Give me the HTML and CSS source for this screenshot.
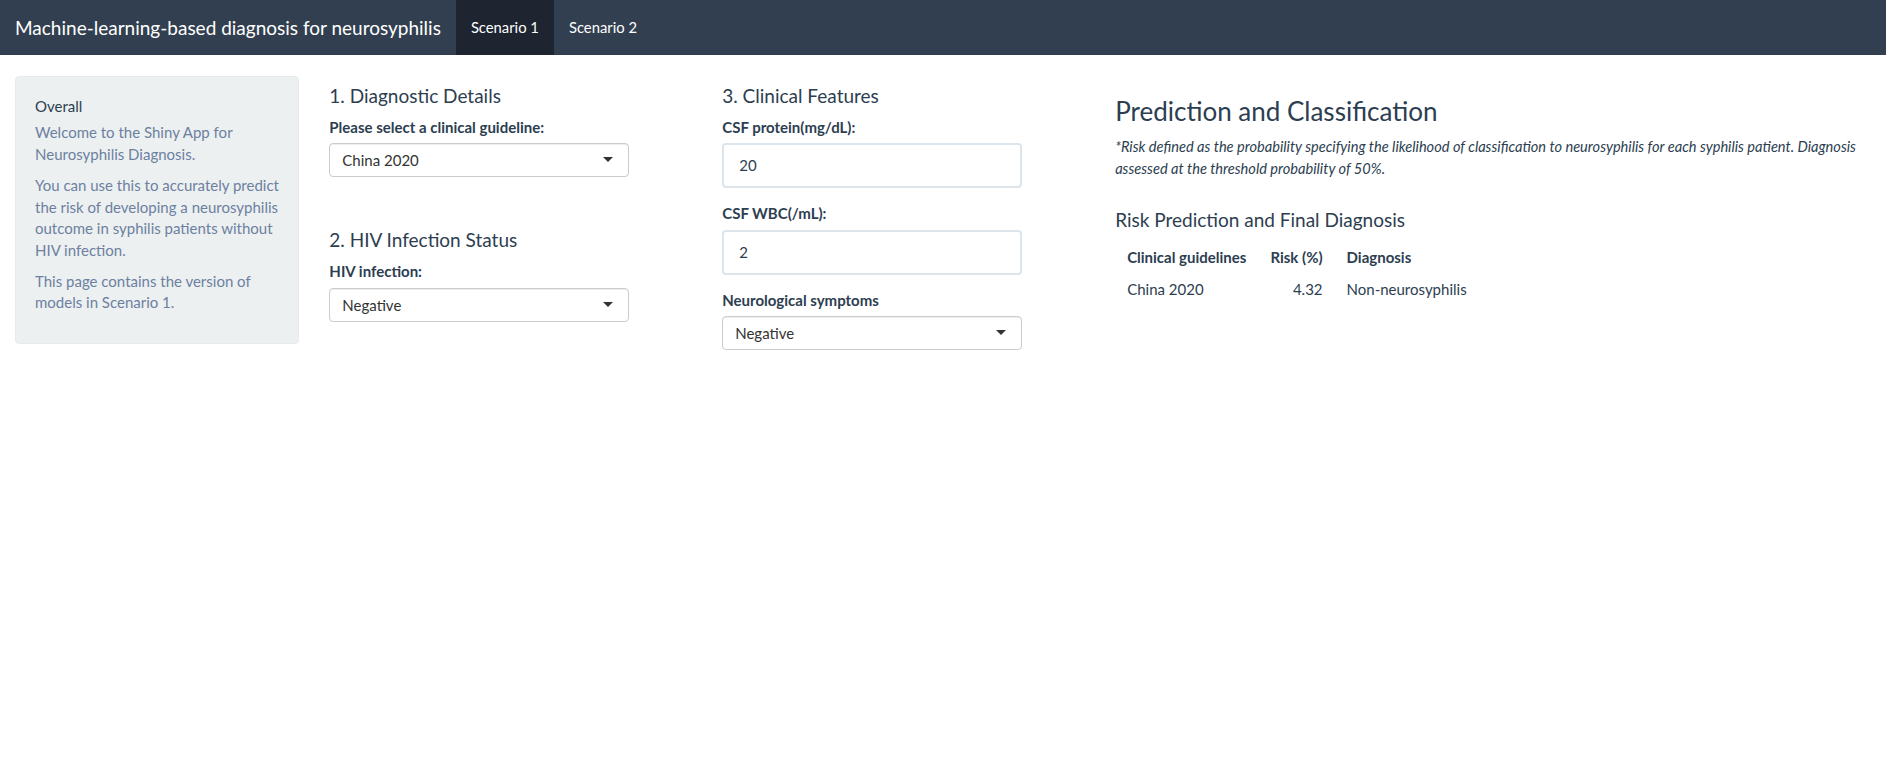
FILE: index.html
```html
<!DOCTYPE html>
<html lang="en">
<head>
<meta charset="utf-8">
<title>Machine-learning-based diagnosis for neurosyphilis</title>
<link rel="stylesheet" href="styles.css">
</head>
<body>
<nav class="navbar">
  <div class="brand">Machine-learning-based diagnosis for neurosyphilis</div>
  <ul class="nav">
    <li class="nav-item active"><a href="#">Scenario 1</a></li>
    <li class="nav-item"><a href="#">Scenario 2</a></li>
  </ul>
</nav>
<div class="container">
  <div class="row">
    <div class="col col-side">
      <div class="well">
        <div class="well-title">Overall</div>
        <p>Welcome to the Shiny App for Neurosyphilis Diagnosis.</p>
        <p>You can use this to accurately predict the risk of developing a neurosyphilis outcome in syphilis patients without HIV infection.</p>
        <p>This page contains the version of models in Scenario 1.</p>
      </div>
    </div>
    <div class="col col-main">
      <div class="row">
        <div class="col col-quarter">
          <h4 class="sec">1. Diagnostic Details</h4>
          <div class="form-group">
            <label class="lbl">Please select a clinical guideline:</label>
            <div class="select"><span>China 2020</span><span class="caret"></span></div>
          </div>
          <h4 class="sec sec-spaced">2. HIV Infection Status</h4>
          <div class="form-group">
            <label class="lbl">HIV infection:</label>
            <div class="select"><span>Negative</span><span class="caret"></span></div>
          </div>
        </div>
        <div class="col col-quarter">
          <h4 class="sec">3. Clinical Features</h4>
          <div class="form-group">
            <label class="lbl">CSF protein(mg/dL):</label>
            <div class="num-input">20</div>
          </div>
          <div class="form-group">
            <label class="lbl">CSF WBC(/mL):</label>
            <div class="num-input">2</div>
          </div>
          <div class="form-group">
            <label class="lbl">Neurological symptoms</label>
            <div class="select"><span>Negative</span><span class="caret"></span></div>
          </div>
        </div>
        <div class="col col-half">
          <h3 class="big">Prediction and Classification</h3>
          <p class="note">*Risk defined as the probability specifying the likelihood of classification to neurosyphilis for each syphilis patient. Diagnosis assessed at the threshold probability of 50%.</p>
          <h4 class="sec sec-result">Risk Prediction and Final Diagnosis</h4>
          <table class="result">
            <thead>
              <tr><th>Clinical guidelines</th><th class="num">Risk (%)</th><th>Diagnosis</th></tr>
            </thead>
            <tbody>
              <tr><td>China 2020</td><td class="num">4.32</td><td>Non-neurosyphilis</td></tr>
            </tbody>
          </table>
        </div>
      </div>
    </div>
  </div>
</div>
</body>
</html>
```
FILE: styles.css
```css
* { box-sizing: border-box; }
html, body { margin: 0; padding: 0; background: #ffffff; }
body {
  font-family: Lato, "Open Sans", "Liberation Sans", sans-serif;
  font-size: 15px;
  line-height: 1.42857;
  color: #2c3e50;
}

/* navbar */
.navbar {
  display: flex;
  align-items: stretch;
  height: 55px;
  background: #323f50;
  margin-bottom: 21px;
}
.brand {
  padding: 0 15px;
  font-size: 19px;
  line-height: 55px;
  color: #ffffff;
  white-space: nowrap;
}
.nav {
  display: flex;
  list-style: none;
  margin: 0;
  padding: 0;
}
.nav-item a {
  display: block;
  padding: 0 15px;
  line-height: 55px;
  color: #ffffff;
  text-decoration: none;
  font-size: 14.8px;
}
.nav-item.active a { background: #1e2430; }

/* grid */
.container { padding: 0 15px; }
.row { display: flex; margin: 0 -15px; }
.col { padding: 0 15px; min-width: 0; }
.col-side { width: 16.6667%; }
.col-main { width: 83.3333%; }
.col-quarter { width: 25%; }
.col-half { width: 50%; }

/* sidebar well */
.well {
  background: #ecf0f1;
  border: 1px solid #e6ebed;
  border-radius: 4px;
  padding: 19px;
}
.well-title { color: #2c3e50; margin-bottom: 5px; }
.well p { margin: 0 0 10px; color: #6c80a0; }

/* headings */
.sec {
  font-size: 19px;
  font-weight: 400;
  line-height: 1.1;
  margin: 10px 0 10px;
  color: #2c3e50;
}
.sec-spaced { margin-top: 53px; }
.sec-result { margin-top: 31px; }
.big {
  font-size: 26px;
  font-weight: 400;
  line-height: 1.1;
  margin: 21px 0 10.5px;
  color: #2c3e50;
}
.note {
  font-style: italic;
  font-size: 14.6px;
  line-height: 21.4px;
  margin: 0 0 10px;
  color: #2c3e50;
}

/* form controls */
.form-group { margin-bottom: 15px; }
.lbl {
  display: inline-block;
  font-weight: 700;
  margin-bottom: 5px;
}
.select {
  position: relative;
  width: 300px;
  max-width: 100%;
  height: 34px;
  padding: 6px 12px;
  border: 1px solid #cccccc;
  border-radius: 4px;
  background: #ffffff;
  box-shadow: inset 0 1px 1px rgba(0,0,0,0.075);
  color: #333333;
  line-height: 20px;
}
.caret {
  position: absolute;
  right: 15px;
  top: 50%;
  margin-top: -3px;
  width: 0;
  height: 0;
  border-style: solid;
  border-width: 5px 5px 0 5px;
  border-color: #333333 transparent transparent transparent;
}
.num-input {
  width: 300px;
  max-width: 100%;
  height: 45px;
  padding: 10px 15px;
  border: 2px solid #dce4ec;
  border-radius: 4px;
  background: #ffffff;
  color: #2c3e50;
  line-height: 21px;
}

/* table */
.result { border-collapse: collapse; margin-top: 0; }
.result th, .result td {
  padding: 5px 12px;
  border-top: 1px solid transparent;
  text-align: left;
  vertical-align: top;
}
.result th { font-weight: 700; }
.result .num { text-align: right; }
```
